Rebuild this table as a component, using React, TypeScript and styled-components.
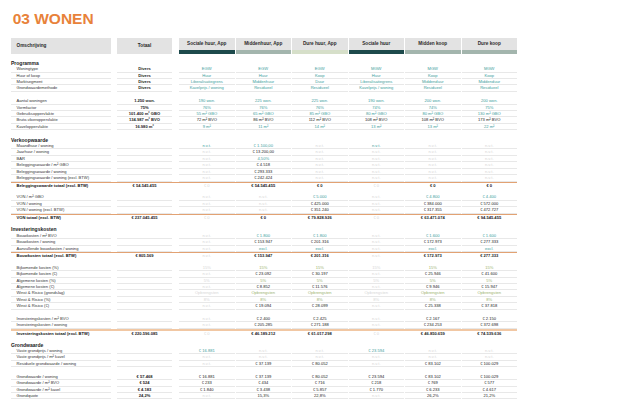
import React from 'react';
import styled, { createGlobalStyle } from 'styled-components';

const GlobalStyle = createGlobalStyle`
  html, body {
    margin: 0;
    padding: 0;
    background: #fff;
  }
  body {
    font-family: 'Liberation Sans', Arial, sans-serif;
    color: #1f1f1f;
  }
`;

type Tone = 'calc' | 'input' | 'off' | 'pct';

const toneColors: Record<Tone, string> = {
  calc: '#222222',
  input: '#3d9e9c',
  off: '#d6d6d6',
  pct: '#9cb26e',
};

const ROW_H = 6.42;

const Page = styled.div`
  padding: 11.3px 0 0 11px;
  width: 640px;
  height: 400px;
  box-sizing: border-box;
  overflow: hidden;
`;

const Title = styled.h1`
  margin: 0 0 10.9px 1.7px;
  font-size: 15.5px;
  line-height: 15.5px;
  font-weight: 700;
  color: #e8823a;
`;

const Line = styled.div<{ $total?: 'light' | 'heavy' }>`
  display: flex;
  width: 506px;
  height: ${ROW_H}px;
  box-sizing: border-box;
  border-top: ${(p) =>
    p.$total === 'heavy'
      ? '2px solid #f1c7a3'
      : p.$total === 'light'
        ? '1px solid #e2a273'
        : 'none'};
`;

const HeadLine = styled.div`
  display: flex;
  width: 506px;
  height: 16.6px;
  margin-bottom: 5.5px;
`;

const Values = styled.div`
  display: grid;
  grid-template-columns: repeat(6, 1fr);
  column-gap: 1px;
  width: 338px;
  margin-left: 7px;
`;

const HeadCell = styled.div<{ $align?: 'left' | 'center'; $bar?: string }>`
  display: flex;
  align-items: center;
  justify-content: ${(p) => (p.$align === 'left' ? 'flex-start' : 'center')};
  padding-left: ${(p) => (p.$align === 'left' ? '5.5px' : '0')};
  background: #e3e3e3;
  box-sizing: border-box;
  border-bottom: ${(p) => (p.$bar ? `4.2px solid ${p.$bar}` : 'none')};
  font-size: 4.7px;
  font-weight: 700;
  color: #2a2a2a;
  white-space: nowrap;
`;

const LabelHead = styled(HeadCell)`
  width: 100px;
`;

const TotalHead = styled(HeadCell)`
  width: 55px;
  margin-left: 6px;
`;

const Section = styled.div`
  font-size: 5px;
  font-weight: 700;
  line-height: ${ROW_H}px;
  color: #1a1a1a;
`;

const Cell = styled.div<{ $tone?: Tone; $bold?: boolean; $plain?: boolean }>`
  height: ${ROW_H}px;
  box-sizing: border-box;
  border-bottom: ${(p) => (p.$plain ? 'none' : '1px solid #e8e8e8')};
  font-size: 4.1px;
  line-height: ${ROW_H - 1}px;
  text-align: center;
  white-space: nowrap;
  overflow: hidden;
  color: ${(p) => toneColors[p.$tone ?? 'calc']};
  font-weight: ${(p) => (p.$bold ? 700 : 400)};
`;

const LabelCell = styled(Cell)`
  width: 100px;
  padding-left: 5.5px;
  text-align: left;
  color: ${(p) => (p.$bold ? '#111' : '#333')};
`;

const TotalCell = styled(Cell)`
  width: 55px;
  margin-left: 6px;
  font-weight: 700;
`;

type Row =
  | { kind: 'section'; label: string }
  | { kind: 'gap' }
  | { kind: 'data'; label: string; total: string; cells: string[] }
  | { kind: 'total'; label: string; total: string; cells: string[]; heavy?: boolean };

const HEADS = [
  { name: 'Sociale huur, App', bar: '#1d4a4c' },
  { name: 'Middenhuur, App', bar: '#a3b5ad' },
  { name: 'Dure huur, App', bar: '#d6dfc9' },
  { name: 'Sociale huur', bar: '#1d4a4c' },
  { name: 'Midden koop', bar: '#a3b5ad' },
  { name: 'Dure koop', bar: '#a3b5ad' },
];

const ROWS: Row[] = [
  { kind: 'section', label: 'Programma' },
  { kind: 'data', label: 'Woningtype', total: 'Divers', cells: ['t:EGW', 't:EGW', 't:EGW', 't:MGW', 't:MGW', 't:MGW'] },
  { kind: 'data', label: 'Huur of koop', total: 'Divers', cells: ['t:Huur', 't:Huur', 't:Koop', 't:Huur', 't:Koop', 't:Koop'] },
  { kind: 'data', label: 'Marktsegment', total: 'Divers', cells: ['t:Liberalisatiegrens', 't:Middenhuur', 't:Duur', 't:Liberalisatiegrens', 't:Middenduur', 't:Middenduur'] },
  { kind: 'data', label: 'Grondwaardemethode', total: 'Divers', cells: ['t:Kavelprijs / woning', 't:Residueel', 't:Residueel', 't:Kavelprijs / woning', 't:Residueel', 't:Residueel'] },
  { kind: 'gap' },
  { kind: 'data', label: 'Aantal woningen', total: '1.250 won.', cells: ['t:190 won.', 't:225 won.', 't:225 won.', 't:190 won.', 't:200 won.', 't:200 won.'] },
  { kind: 'data', label: 'Vormfactor', total: '75%', cells: ['t:76%', 't:76%', 't:76%', 't:74%', 't:74%', 't:75%'] },
  { kind: 'data', label: 'Gebruiksoppervlakte', total: '101.400 m² GBO', cells: ['t:55 m² GBO', 't:65 m² GBO', 't:85 m² GBO', 't:80 m² GBO', 't:80 m² GBO', 't:130 m² GBO'] },
  { kind: 'data', label: 'Bruto-vloeroppervlakte', total: '134.987 m² BVO', cells: ['72 m² BVO', '86 m² BVO', '112 m² BVO', '108 m² BVO', '108 m² BVO', '173 m² BVO'] },
  { kind: 'data', label: 'Kaveloppervlakte', total: '16.980 m²', cells: ['t:9 m²', 't:11 m²', 't:14 m²', 't:13 m²', 't:13 m²', 't:22 m²'] },
  { kind: 'gap' },
  { kind: 'section', label: 'Verkoopwaarde' },
  { kind: 'data', label: 'Maandhuur / woning', total: '', cells: ['t:n.v.t.', 't:€ 1.100,00', '-', 't:n.v.t.', '-', '-'] },
  { kind: 'data', label: 'Jaarhuur / woning', total: '', cells: ['-', '€ 13.200,00', '-', '-', '-', '-'] },
  { kind: 'data', label: 'BAR', total: '', cells: ['-', 't:4,50%', '-', '-', '-', '-'] },
  { kind: 'data', label: 'Beleggingswaarde / m² GBO', total: '', cells: ['-', '€ 4.518', '-', '-', '-', '-'] },
  { kind: 'data', label: 'Beleggingswaarde / woning', total: '', cells: ['-', '€ 293.333', '-', '-', '-', '-'] },
  { kind: 'data', label: 'Beleggingswaarde / woning (excl. BTW)', total: '', cells: ['-', '€ 242.424', '-', '-', '-', '-'] },
  { kind: 'total', label: 'Beleggingswaarde totaal (excl. BTW)', total: '€ 54.545.455', cells: ['o:€ 0', '€ 54.545.455', '€ 0', 'o:€ 0', '€ 0', '€ 0'] },
  { kind: 'gap' },
  { kind: 'data', label: 'VON / m² GBO', total: '', cells: ['-', '-', 't:€ 5.000', '-', 't:€ 4.800', 't:€ 4.400'] },
  { kind: 'data', label: 'VON / woning', total: '', cells: ['-', '-', '€ 425.000', '-', '€ 384.000', '€ 572.000'] },
  { kind: 'data', label: 'VON / woning (excl. BTW)', total: '', cells: ['-', '-', '€ 351.240', '-', '€ 317.355', '€ 472.727'] },
  { kind: 'total', label: 'VON totaal (excl. BTW)', total: '€ 237.045.455', cells: ['o:€ 0', '€ 0', '€ 79.828.926', 'o:€ 0', '€ 63.471.074', '€ 94.545.455'] },
  { kind: 'gap' },
  { kind: 'section', label: 'Investeringskosten' },
  { kind: 'data', label: 'Bouwkosten / m² BVO', total: '', cells: ['-', 't:€ 1.800', 't:€ 1.800', '-', 't:€ 1.600', 't:€ 1.600'] },
  { kind: 'data', label: 'Bouwkosten / woning', total: '', cells: ['-', '€ 153.947', '€ 201.316', '-', '€ 172.973', '€ 277.333'] },
  { kind: 'data', label: 'Aanvullende bouwkosten / woning', total: '', cells: ['-', 't:excl.', 't:excl.', '-', 't:excl.', 't:excl.'] },
  { kind: 'total', label: 'Bouwkosten totaal (excl. BTW)', total: '€ 805.569', cells: ['-', '€ 153.947', '€ 201.316', '-', '€ 172.973', '€ 277.333'] },
  { kind: 'gap' },
  { kind: 'data', label: 'Bijkomende kosten (%)', total: '', cells: ['o:15%', 'g:15%', 'g:15%', 'o:15%', 'g:15%', 'g:15%'] },
  { kind: 'data', label: 'Bijkomende kosten (€)', total: '', cells: ['-', '€ 23.092', '€ 30.197', '-', '€ 25.946', '€ 41.600'] },
  { kind: 'data', label: 'Algemene kosten (%)', total: '', cells: ['o:5%', 'g:5%', 'g:5%', 'o:5%', 'g:5%', 'g:5%'] },
  { kind: 'data', label: 'Algemene kosten (€)', total: '', cells: ['-', '€ 8.852', '€ 11.576', '-', '€ 9.946', '€ 15.947'] },
  { kind: 'data', label: 'Winst & Risico (grondslag)', total: '', cells: ['o:Opbrengsten', 'g:Opbrengsten', 'g:Opbrengsten', 'o:Opbrengsten', 'g:Opbrengsten', 'g:Opbrengsten'] },
  { kind: 'data', label: 'Winst & Risico (%)', total: '', cells: ['o:8%', 'g:8%', 'g:8%', 'o:8%', 'g:8%', 'g:8%'] },
  { kind: 'data', label: 'Winst & Risico (€)', total: '', cells: ['-', '€ 19.094', '€ 28.099', '-', '€ 25.338', '€ 37.818'] },
  { kind: 'gap' },
  { kind: 'data', label: 'Investeringskosten / m² BVO', total: '', cells: ['-', '€ 2.400', '€ 2.425', '-', '€ 2.167', '€ 2.150'] },
  { kind: 'data', label: 'Investeringskosten / woning', total: '', cells: ['-', '€ 205.285', '€ 271.188', '-', '€ 234.253', '€ 372.698'] },
  { kind: 'total', heavy: true, label: 'Investeringskosten totaal (excl. BTW)', total: '€ 220.596.085', cells: ['o:€ 0', '€ 46.189.212', '€ 61.017.298', 'o:€ 0', '€ 46.850.659', '€ 74.539.636'] },
  { kind: 'gap' },
  { kind: 'section', label: 'Grondwaarde' },
  { kind: 'data', label: 'Vaste grondprijs / woning', total: '', cells: ['t:€ 16.881', '-', '-', 't:€ 23.594', '-', '-'] },
  { kind: 'data', label: 'Vaste grondprijs / m² kavel', total: '', cells: ['-', '-', '-', '-', '-', '-'] },
  { kind: 'data', label: 'Residuele grondwaarde / woning', total: '', cells: ['-', '€ 37.139', '€ 80.052', '-', '€ 83.102', '€ 100.029'] },
  { kind: 'gap' },
  { kind: 'data', label: 'Grondwaarde / woning', total: '€ 57.468', cells: ['€ 16.881', '€ 37.139', '€ 80.052', '€ 23.594', '€ 83.102', '€ 100.029'] },
  { kind: 'data', label: 'Grondwaarde / m² BVO', total: '€ 524', cells: ['€ 233', '€ 434', '€ 716', '€ 218', '€ 769', '€ 577'] },
  { kind: 'data', label: 'Grondwaarde / m² kavel', total: '€ 4.183', cells: ['€ 1.840', '€ 3.438', '€ 5.857', '€ 1.770', '€ 6.233', '€ 4.617'] },
  { kind: 'data', label: 'Grondquote', total: '24,2%', cells: ['-', '15,3%', '22,8%', '-', '26,2%', '21,2%'] },
];

const parse = (raw: string): { text: string; tone: Tone } => {
  if (raw === '-') return { text: 'n.v.t.', tone: 'off' };
  if (raw.startsWith('t:')) return { text: raw.slice(2), tone: 'input' };
  if (raw.startsWith('o:')) return { text: raw.slice(2), tone: 'off' };
  if (raw.startsWith('g:')) return { text: raw.slice(2), tone: 'pct' };
  return { text: raw, tone: 'calc' };
};

const TableRow: React.FC<{ row: Row }> = ({ row }) => {
  if (row.kind === 'gap') return <Line />;
  if (row.kind === 'section') {
    return (
      <Line>
        <Section>{row.label}</Section>
      </Line>
    );
  }
  const isTotal = row.kind === 'total';
  return (
    <Line $total={isTotal ? (row.heavy ? 'heavy' : 'light') : undefined}>
      <LabelCell $plain={isTotal} $bold={isTotal}>
        {row.label}
      </LabelCell>
      <TotalCell $plain={isTotal}>{row.total}</TotalCell>
      <Values>
        {row.cells.map((c, i) => {
          const { text, tone } = parse(c);
          return (
            <Cell key={i} $tone={tone} $bold={isTotal && tone === 'calc'} $plain={isTotal}>
              {text}
            </Cell>
          );
        })}
      </Values>
    </Line>
  );
};

const App: React.FC = () => {
  return (
    <>
      <GlobalStyle />
      <Page>
        <Title>03 WONEN</Title>
        <HeadLine>
          <LabelHead $align="left">Omschrijving</LabelHead>
          <TotalHead>Totaal</TotalHead>
          <Values>
            {HEADS.map((h) => (
              <HeadCell key={h.name} $bar={h.bar}>
                {h.name}
              </HeadCell>
            ))}
          </Values>
        </HeadLine>
        {ROWS.map((row, i) => (
          <TableRow key={i} row={row} />
        ))}
      </Page>
    </>
  );
};

export default App;
